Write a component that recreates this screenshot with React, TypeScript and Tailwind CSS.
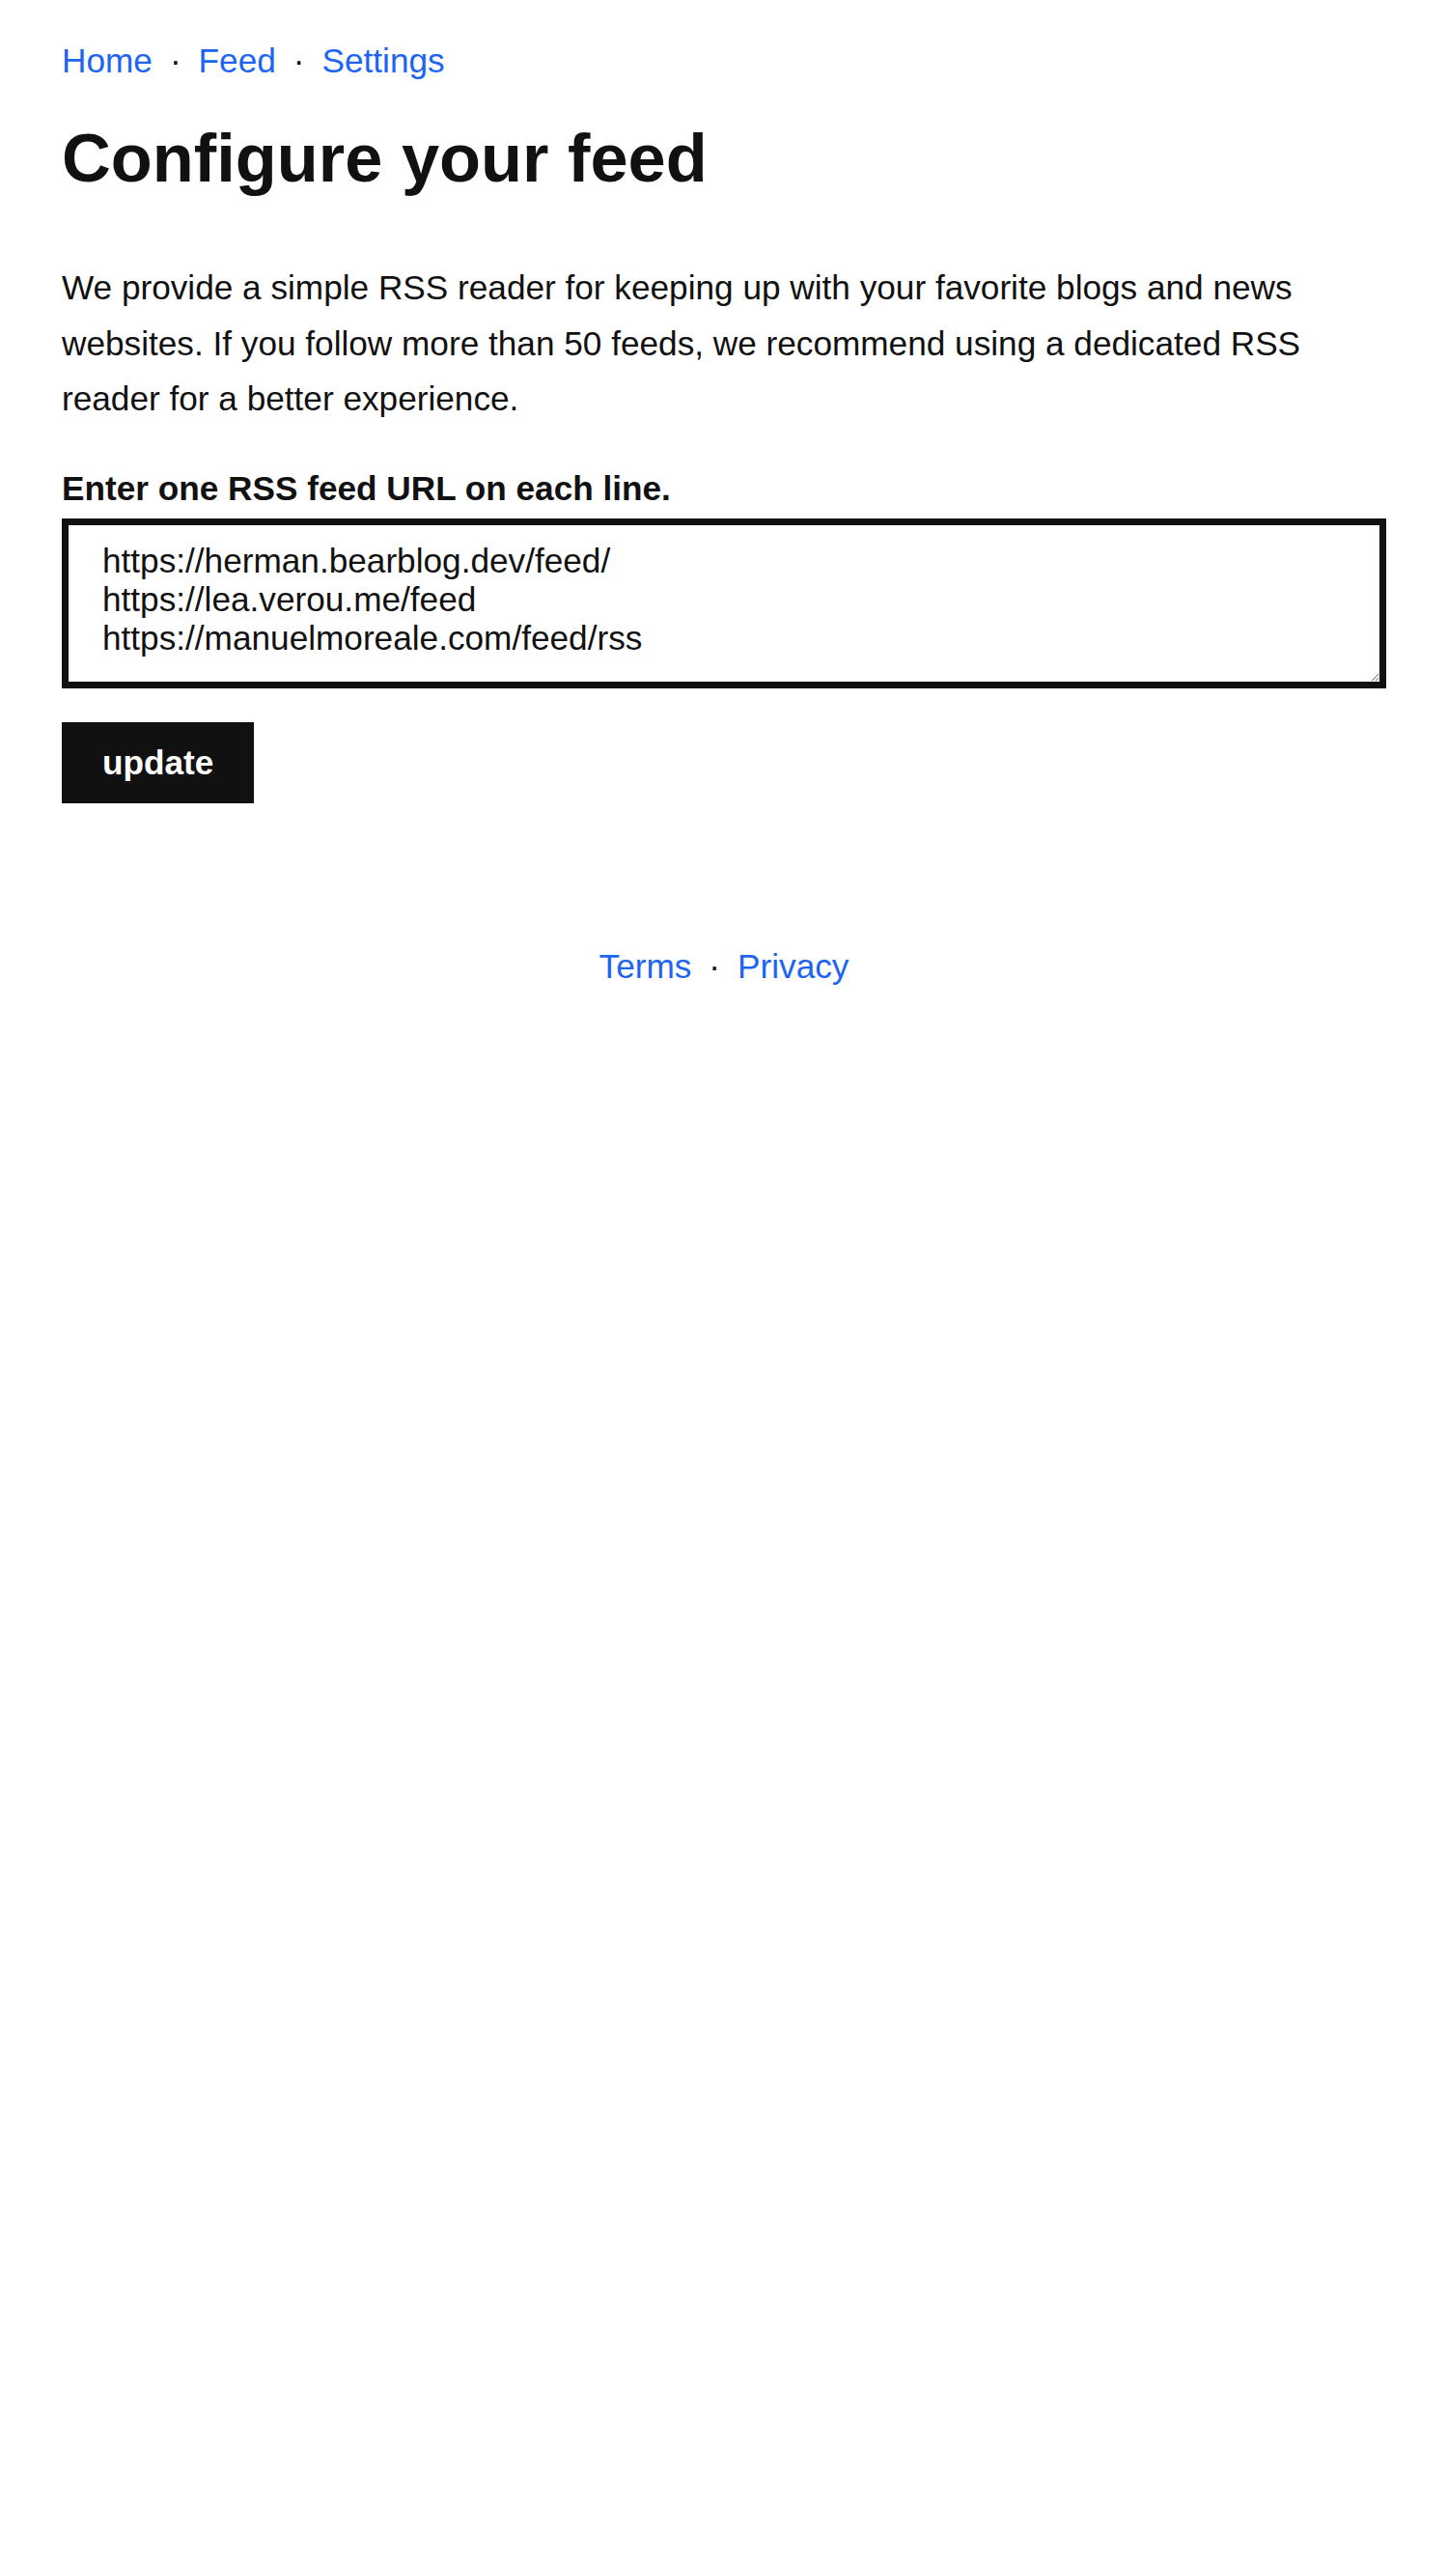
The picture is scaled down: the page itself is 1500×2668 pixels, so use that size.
import { useState } from "react"

const links = ["Home", "Feed", "Settings"]

const initialFeeds = [
  "https://herman.bearblog.dev/feed/",
  "https://lea.verou.me/feed",
  "https://manuelmoreale.com/feed/rss",
].join("\n")

function Dot() {
  return <span className="px-[18px] text-[#111]">·</span>
}

export default function App() {
  const [feeds, setFeeds] = useState(initialFeeds)

  return (
    <div className="min-h-screen bg-white font-['Liberation_Sans',Arial,sans-serif] text-[35.2px] text-[#111]">
      <div className="px-[64px] pt-[43px]">
        <nav className="leading-[40px]">
          {links.map((link, i) => (
            <span key={link}>
              {i > 0 && <Dot />}
              <a href="#" className="text-[#1d64f2]">
                {link}
              </a>
            </span>
          ))}
        </nav>

        <h1 className="mt-[41px] text-[70.4px] font-bold leading-[80px]">Configure your feed</h1>

        <p className="mt-[65px] leading-[57.5px]">
          We provide a simple RSS reader for keeping up with your favorite blogs and news websites. If you
          follow more than 50 feeds, we recommend using a dedicated RSS reader for a better experience.
        </p>

        <form onSubmit={(e) => e.preventDefault()}>
          <label htmlFor="feeds" className="mt-[44px] block font-bold leading-[40px]">
            Enter one RSS feed URL on each line.
          </label>
          <textarea
            id="feeds"
            value={feeds}
            onChange={(e) => setFeeds(e.target.value)}
            className="mt-[11px] block h-[176px] w-full border-[7px] border-[#111] bg-white px-[35px] pt-[17px] leading-[40.45px] text-[#111] outline-none"
          />
          <button
            type="submit"
            className="mt-[35px] block bg-[#111] px-[42px] py-[22px] font-bold leading-[40px] text-white"
          >
            update
          </button>
        </form>

        <footer className="mt-[149px] text-center leading-[40px]">
          <a href="#" className="text-[#1d64f2]">
            Terms
          </a>
          <Dot />
          <a href="#" className="text-[#1d64f2]">
            Privacy
          </a>
        </footer>
      </div>
    </div>
  )
}
